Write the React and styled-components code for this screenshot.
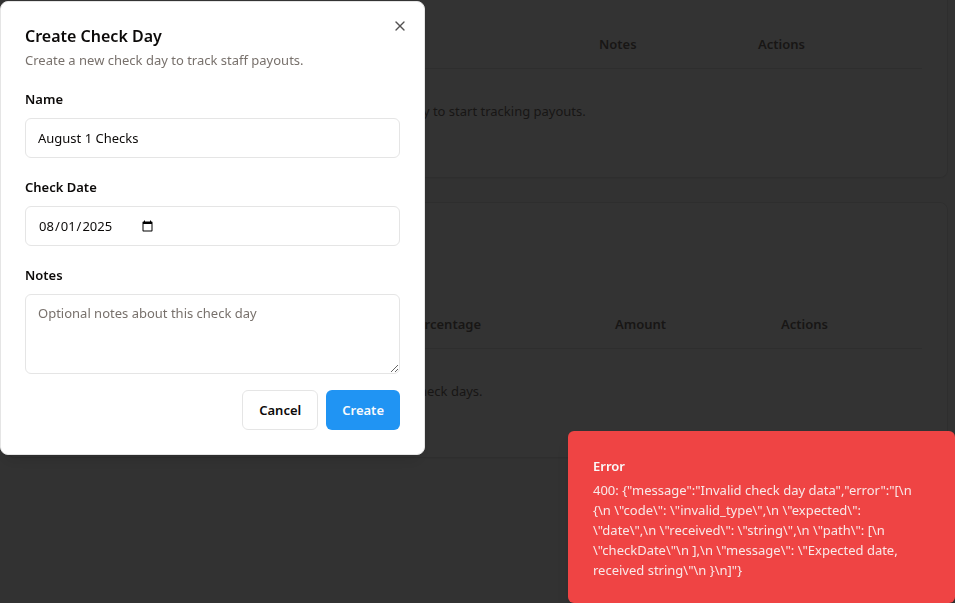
import React from "react";
import styled, { createGlobalStyle } from "styled-components";
import { X } from "lucide-react";

const GlobalStyle = createGlobalStyle`
  *, *::before, *::after { box-sizing: border-box; }
  body {
    margin: 0;
    background: #fafafa;
    color: #0c0a09;
    font-family: "Noto Sans", "Open Sans", sans-serif;
    font-size: 13px;
    line-height: 20px;
    overflow: hidden;
  }
  button, input, textarea { font: inherit; color: inherit; }
`;

const Page = styled.main`
  display: flex;
  flex-direction: column;
  gap: 24px;
  min-height: 100vh;
  padding: 0 7px 24px;
`;

const Card = styled.section`
  background: #ffffff;
  border: 1px solid #e5e5e5;
  border-radius: 8px;
  border-top-width: ${(p) => (p.$continued ? "0" : "1px")};
  border-top-left-radius: ${(p) => (p.$continued ? "0" : "8px")};
  border-top-right-radius: ${(p) => (p.$continued ? "0" : "8px")};
  padding: ${(p) => (p.$continued ? "20px" : "98px")} 25px 24px;
  box-shadow: 0 1px 2px rgba(0, 0, 0, 0.05);
`;

const Table = styled.table`
  width: 100%;
  table-layout: fixed;
  border-collapse: collapse;
  color: #78716c;
`;

const HeadCell = styled.th`
  width: ${(p) => p.$width};
  height: 48px;
  padding: 0 16px;
  border-bottom: 1px solid #e5e5e5;
  text-align: left;
  font-weight: 600;
`;

const EmptyCell = styled.td`
  padding: 32px 236px 32px 0;
  text-align: center;
  white-space: nowrap;
`;

const Overlay = styled.div`
  position: fixed;
  inset: 0;
  background: rgba(0, 0, 0, 0.8);
`;

const Dialog = styled.div`
  position: fixed;
  top: 1px;
  left: 0;
  width: 100%;
  max-width: 425px;
  display: grid;
  gap: 16px;
  padding: 24px;
  background: #ffffff;
  border: 1px solid #e5e5e5;
  border-radius: 8px;
  box-shadow: 0 10px 15px -3px rgba(0, 0, 0, 0.1), 0 4px 6px -4px rgba(0, 0, 0, 0.1);
`;

const DialogHeader = styled.header`
  display: flex;
  flex-direction: column;
  gap: 4px;
`;

const DialogTitle = styled.h2`
  margin: 0;
  font-size: 16px;
  line-height: 20px;
  font-weight: 600;
`;

const DialogText = styled.p`
  margin: 0;
  color: #78716c;
`;

const CloseButton = styled.button`
  position: absolute;
  top: 16px;
  right: 16px;
  display: flex;
  padding: 0;
  border: 0;
  background: none;
  opacity: 0.7;
`;

const Form = styled.form`
  display: flex;
  flex-direction: column;
  gap: 16px;
`;

const Field = styled.div`
  display: flex;
  flex-direction: column;
  gap: 8px;
`;

const Label = styled.label`
  padding-top: 2px;
  line-height: 22px;
  font-weight: 600;
`;

const Input = styled.input`
  display: flex;
  width: 100%;
  height: 40px;
  padding: 8px 12px;
  background: #ffffff;
  border: 1px solid #e5e5e5;
  border-radius: 6px;
  outline: none;
`;

const TextArea = styled.textarea`
  width: 100%;
  height: 80px;
  padding: 8px 12px;
  background: #ffffff;
  border: 1px solid #e5e5e5;
  border-radius: 6px;
  outline: none;
  &::placeholder { color: #78716c; }
`;

const Actions = styled.div`
  display: flex;
  justify-content: flex-end;
  gap: 8px;
`;

const Button = styled.button`
  height: 40px;
  padding: 0 16px;
  border: ${(p) => (p.$primary ? "0" : "1px solid #e5e5e5")};
  border-radius: 6px;
  background: ${(p) => (p.$primary ? "#2094f3" : "#ffffff")};
  color: ${(p) => (p.$primary ? "#f8fafc" : "#0c0a09")};
  font-weight: 600;
`;

const Toast = styled.div`
  position: fixed;
  right: 0;
  bottom: 0;
  width: 387px;
  max-width: 100%;
  display: grid;
  gap: 4px;
  padding: 25px 25px 23px;
  border-radius: 6px;
  background: #ef4444;
  color: #fafafa;
  box-shadow: 0 10px 15px -3px rgba(0, 0, 0, 0.1), 0 4px 6px -4px rgba(0, 0, 0, 0.1);
`;

const ToastTitle = styled.div`
  font-weight: 600;
`;

const ToastText = styled.div`
  opacity: 0.9;
`;

const ToastLine = styled.span`
  display: block;
  white-space: nowrap;
`;

const ERROR_LINES = [
  String.raw`400: {"message":"Invalid check day data","error":"[\n`,
  String.raw`{\n \"code\": \"invalid_type\",\n \"expected\":`,
  String.raw`\"date\",\n \"received\": \"string\",\n \"path\": [\n`,
  String.raw`\"checkDate\"\n ],\n \"message\": \"Expected date,`,
  String.raw`received string\"\n }\n]"}`,
];

const CHECK_DAY_COLUMNS = [
  ["", "550px"],
  ["Notes", "159px"],
  ["Actions", "180px"],
];

const PAYOUT_COLUMNS = [
  ["", "360px"],
  ["Percentage", "206px"],
  ["Amount", "166px"],
  ["Actions", "157px"],
];

function ListTable({ columns, empty }) {
  return (
    <Table>
      <thead>
        <tr>
          {columns.map(([label, width]) => (
            <HeadCell key={label} $width={width}>{label}</HeadCell>
          ))}
        </tr>
      </thead>
      <tbody>
        <tr>
          <EmptyCell colSpan={columns.length}>{empty}</EmptyCell>
        </tr>
      </tbody>
    </Table>
  );
}

export default function App() {
  return (
    <>
      <GlobalStyle />
      <Page>
        <Card $continued>
          <ListTable
            columns={CHECK_DAY_COLUMNS}
            empty="No check days found. Create your first check day to start tracking payouts."
          />
        </Card>
        <Card>
          <ListTable columns={PAYOUT_COLUMNS} empty="No payouts found for recent check days." />
        </Card>
      </Page>
      <Overlay />
      <Dialog role="dialog" aria-modal="true" aria-labelledby="dialog-title">
        <DialogHeader>
          <DialogTitle id="dialog-title">Create Check Day</DialogTitle>
          <DialogText>Create a new check day to track staff payouts.</DialogText>
        </DialogHeader>
        <Form onSubmit={(e) => e.preventDefault()}>
          <Field>
            <Label htmlFor="name">Name</Label>
            <Input id="name" defaultValue="August 1 Checks" />
          </Field>
          <Field>
            <Label htmlFor="date">Check Date</Label>
            <Input id="date" type="date" defaultValue="2025-08-01" />
          </Field>
          <Field>
            <Label htmlFor="notes">Notes</Label>
            <TextArea id="notes" placeholder="Optional notes about this check day" />
          </Field>
          <Actions>
            <Button type="button">Cancel</Button>
            <Button type="submit" $primary>Create</Button>
          </Actions>
        </Form>
        <CloseButton type="button" aria-label="Close">
          <X size={16} />
        </CloseButton>
      </Dialog>
      <Toast role="alert">
        <ToastTitle>Error</ToastTitle>
        <ToastText>
          {ERROR_LINES.map((line) => (
            <ToastLine key={line}>{line}</ToastLine>
          ))}
        </ToastText>
      </Toast>
    </>
  );
}
